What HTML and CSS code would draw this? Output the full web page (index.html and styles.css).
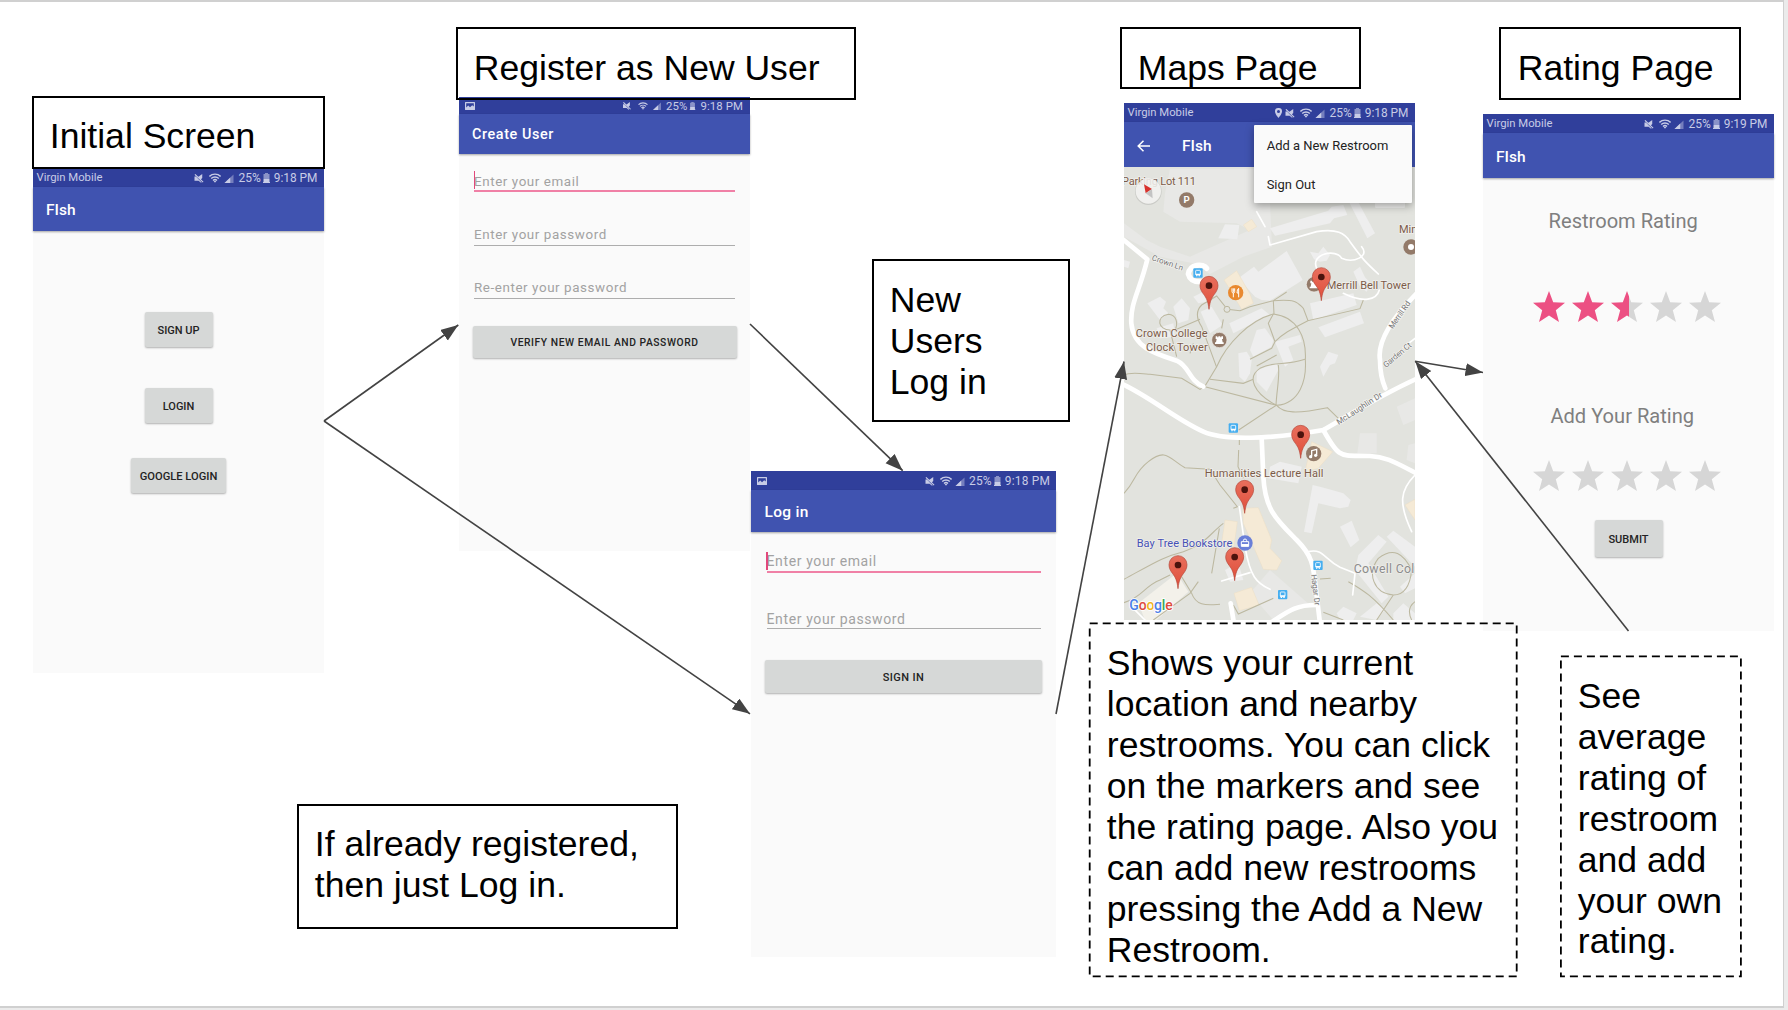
FILE: index.html
```html
<!DOCTYPE html>
<html lang="en">
<head>
<meta charset="utf-8">
<title>FIsh app flow</title>
<link rel="stylesheet" href="styles.css">
</head>
<body>
<svg class="defs" width="0" height="0" aria-hidden="true">
  <defs>
    <symbol id="i-mute" viewBox="0 0 10 10"><path d="M0 2.8H1.6L7.6 8.8V10L4.5 7.4H0ZM4 3.4 8.6 0V4.4L7 6ZM0 .9 1 0 10 8.6 9.2 9.4Z" fill="currentColor"/></symbol>
    <symbol id="i-wifi" viewBox="0 0 12 10"><path d="M.4 3.4C3.4.4 8.6.4 11.6 3.4M2.2 5.5C4.3 3.5 7.7 3.5 9.8 5.5M4 7.4C5.2 6.3 6.8 6.3 8 7.4" fill="none" stroke="currentColor" stroke-width="1.4"/><path d="M4.4 7.8 6 9.8 7.6 7.8Z" fill="currentColor"/></symbol>
    <symbol id="i-signal" viewBox="0 0 10 10"><path d="M0 10 10 .5V10Z" fill="currentColor" opacity=".45"/><path d="M0 10 6.4 4V10Z" fill="currentColor"/></symbol>
    <symbol id="i-battery" viewBox="0 0 7 10"><path d="M2 0H5V1H6.5V6H.5V1H2Z" fill="currentColor" opacity=".6"/><path d="M.5 6H6.5V9H7V10H0V9H.5Z" fill="currentColor"/></symbol>
    <symbol id="i-picture" viewBox="0 0 10 8"><path fill-rule="evenodd" d="M.6 0H9.4Q10 0 10 .6V7.4Q10 8 9.4 8H.6Q0 8 0 7.4V.6Q0 0 .6 0ZM1.2 1.2V5.4L3.2 3.6 5 5.2 7.2 3.2 8.8 4.6V1.2Z" fill="currentColor"/></symbol>
    <symbol id="i-place" viewBox="0 0 7 10"><path fill-rule="evenodd" d="M3.5 0A3.4 3.4 0 0 1 7 3.5C7 6 3.5 10 3.5 10S0 6 0 3.5A3.4 3.4 0 0 1 3.5 0ZM3.5 2A1.5 1.5 0 1 0 3.5 5 1.5 1.5 0 0 0 3.5 2Z" fill="currentColor"/></symbol>
    <symbol id="i-star" viewBox="0 0 32 31"><path d="M16 0 20.2 11.2 32 11.8 22.8 19.3 26 31 16 24.5 6 31 9.2 19.3 0 11.8 11.8 11.2Z" fill="currentColor"/></symbol>
    <linearGradient id="g-pin" x1="0" y1="0" x2="0" y2="1"><stop offset="0" stop-color="#e86f5d"/><stop offset="1" stop-color="#e04f3b"/></linearGradient>
    <linearGradient id="g-half"><stop offset=".55" stop-color="#ec5083"/><stop offset=".55" stop-color="#d6d6d6"/></linearGradient>
    <g id="pin"><path d="M0 0C-3-26-8-34-16-45-23-54-27-62-27-72A27 27 0 0 1 27-72C27-62 23-54 16-45 8-34 3-26 0 0Z" fill="url(#g-pin)" stroke="#b4473a" stroke-width="2"/><circle cy="-71" r="10" fill="#4b130d"/></g>
    <g id="bus"><rect x="-14" y="-14" width="28" height="28" rx="3" fill="#45aef0"/><rect x="-7" y="-8" width="14" height="14" rx="2" fill="none" stroke="#fff" stroke-width="2.5"/><path d="M-7 2H7V6H-7ZM-6 7h4v3h-4ZM2 7h4v3h-4Z" fill="#fff"/></g>
    <g id="rook"><circle r="23" fill="#937a69" stroke="#f2efea" stroke-width="2"/><path d="M-11-11h5v3h3v-3h6v3h3v-3h5v8h-3l2 10h3v5h-26v-5h3l2-10h-3Z" fill="#fff"/></g>
  </defs>
</svg>

<main class="slide">

  <section class="phone phone-initial">
    <div class="status"><span class="carrier">Virgin Mobile</span><svg class="mute"><use href="#i-mute"/></svg><svg class="wifi"><use href="#i-wifi"/></svg><svg class="signal"><use href="#i-signal"/></svg><span>25%</span><svg class="battery"><use href="#i-battery"/></svg><span class="time">9:18 PM</span></div>
    <header class="appbar">FIsh</header>
    <div class="stack">
      <button class="btn">SIGN UP</button>
      <button class="btn">LOGIN</button>
      <button class="btn btn-google">GOOGLE LOGIN</button>
    </div>
  </section>

  <section class="phone phone-create">
    <div class="status"><svg class="picture"><use href="#i-picture"/></svg><svg class="mute"><use href="#i-mute"/></svg><svg class="wifi"><use href="#i-wifi"/></svg><svg class="signal"><use href="#i-signal"/></svg><span>25%</span><svg class="battery"><use href="#i-battery"/></svg><span class="time">9:18 PM</span></div>
    <header class="appbar">Create User</header>
    <div class="form">
      <div class="field focused">Enter your email</div>
      <div class="field">Enter your password</div>
      <div class="field">Re-enter your password</div>
      <button class="btn">VERIFY NEW EMAIL AND PASSWORD</button>
    </div>
  </section>

  <section class="phone phone-login">
    <div class="status"><svg class="picture"><use href="#i-picture"/></svg><svg class="mute"><use href="#i-mute"/></svg><svg class="wifi"><use href="#i-wifi"/></svg><svg class="signal"><use href="#i-signal"/></svg><span>25%</span><svg class="battery"><use href="#i-battery"/></svg><span class="time">9:18 PM</span></div>
    <header class="appbar">Log in</header>
    <div class="form">
      <div class="field focused">Enter your email</div>
      <div class="field">Enter your password</div>
      <button class="btn">SIGN IN</button>
    </div>
  </section>

  <section class="phone phone-map">
    <div class="status"><span class="carrier">Virgin Mobile</span><svg class="place"><use href="#i-place"/></svg><svg class="mute"><use href="#i-mute"/></svg><svg class="wifi"><use href="#i-wifi"/></svg><svg class="signal"><use href="#i-signal"/></svg><span>25%</span><svg class="battery"><use href="#i-battery"/></svg><span class="time">9:18 PM</span></div>
    <header class="appbar"><svg class="back" viewBox="0 0 13 12"><path d="M13 6H1.5M6.5.8 1.2 6 6.5 11.2" fill="none" stroke="#fff" stroke-width="1.5"/></svg>FIsh</header>
    <svg class="map" viewBox="42 231 873 1359" preserveAspectRatio="none">
      <rect x="42" y="231" width="873" height="1359" fill="#e2e3de"/>
      <!-- lots and plazas -->
      <g fill="#e8e8e6">
        <path d="M180 236H440V330L480 340 486 470 400 500 300 552 250 520 150 500 42 440V400L110 450 150 470 240 500 420 420 380 400 210 395 160 365 165 310Z"/>
        <path d="M480 1440 600 1545 490 1590 420 1510Z"/><path d="M860 950 915 925V990L880 1005Z"/><path d="M750 1030H800V1090H742Z"/><path d="M895 1065 915 1060V1120L890 1110Z"/>
      </g>
      <!-- buildings -->
      <g fill="#eeeeee">
        <path d="M325 445 345 403 388 405 382 448Z"/><path d="M480 415 655 362 665 350 700 345 712 375 672 385 660 400 495 437Z"/><path d="M710 322 735 318 795 430 772 445Z"/>
        <path d="M600 485 625 490 640 470 660 495 650 512 630 515 612 508Z"/><path d="M385 565 432 530 445 545 530 483 578 570 480 632 455 630 435 620Z"/>
        <path d="M730 545 750 530 765 562 782 580 770 605 750 590Z"/><path d="M600 640 730 610 740 645 610 690Z"/><path d="M625 712 750 665 762 700 645 742Z"/>
        <path d="M112 640 150 620 168 635 160 655 175 670 150 690Z"/><path d="M190 650 215 625 240 655 235 690 205 700Z"/><path d="M272 665 305 650 338 705 300 730Z"/><path d="M358 700 455 655 480 675 370 730Z"/>
        <path d="M250 620 280 605 290 635 265 640Z"/><path d="M420 780 440 720 465 715 490 750 485 770 430 800Z"/><path d="M385 790 410 785 425 810 420 850 405 875 388 860Z"/><path d="M495 755 570 735 575 755 535 770 550 810 525 830Z"/><path d="M440 840 500 820 505 840 470 905 440 875Z"/>
        <path d="M630 830 655 785 685 795 675 820 660 825 640 860Z"/><path d="M140 715 190 700 195 740 150 745Z"/><path d="M42 510 60 515 55 535 42 530Z"/>
        <path d="M480 1130 510 1115 575 1130 565 1180 475 1165Z"/><path d="M608 1185 630 1190 700 1210 722 1230 715 1250 690 1255 625 1240 605 1330 582 1325Z"/><path d="M690 1310 725 1292 748 1350 722 1372Z"/>
        <path d="M745 1395 805 1335 830 1355 775 1420 835 1520 815 1540 735 1440Z"/><path d="M830 1340 850 1322 915 1370V1430Z"/><path d="M750 1580 800 1540 825 1560 800 1590ZM850 1570 880 1540 915 1570V1590H850ZM680 1570 700 1550 740 1570 730 1590H690Z"/><path d="M870 1490 915 1450V1495L885 1510Z"/><path d="M345 1440 385 1420 400 1470 360 1475Z"/>
      </g>
      <path fill="#f3f1ea" d="M85 1540 200 1450 235 1505 140 1590H105Z"/>
      <g fill="#f5ead6" stroke="#eddfc5" stroke-width="1.5">
        <path d="M400 405 425 388 440 410 415 425Z"/><path d="M342 570 380 542 420 612 430 640 395 658 372 620 355 590Z"/><path d="M605 1055 668 1085 625 1135 585 1145Z"/><path d="M398 1255 445 1253 485 1350 480 1375 515 1412 500 1440 460 1438 400 1300Z"/><path d="M345 1290 382 1295 372 1370 335 1360Z"/><path d="M372 1510 425 1492 447 1545 388 1562Z"/><path d="M885 1245 915 1228V1290Z"/>
      </g>
      <!-- footpaths -->
      <g fill="none" stroke="#bcb8a0" stroke-width="3.2">
        <path d="M42 855C60 845 90 850 120 853L215 865 270 898 285 888 320 830C350 760 420 690 490 672 560 680 590 740 586 810 590 870 570 940 500 946L285 890"/>
        <path d="M300 868 400 880 430 868M500 946C430 910 410 860 450 835 500 810 520 830 585 808M505 825C510 860 500 900 498 946L386 1020M500 946C520 970 560 972 652 953L685 985"/>
        <path d="M492 672 490 632 530 606M490 632 420 650 390 662 352 658 320 618 275 645C255 665 262 690 275 710L320 832M490 632C560 628 560 635 580 655L594 692 750 656 760 630M594 692C540 720 520 730 495 755L475 700 490 672M495 755 485 775 420 808M500 795 440 828"/>
        <path d="M200 800 180 720C145 720 135 680 175 673 200 675 205 700 195 720L270 688M340 688 335 715M250 760 240 790"/>
        <path d="M42 1210C80 1170 70 1150 115 1115 170 1070 180 1110 225 1133L300 1138 330 1185 382 1250 370 1255M386 1080 384 1130 400 1165M388 1050V1065"/>
        <path d="M42 1468C130 1420 160 1400 220 1385 290 1360 300 1330 340 1300M328 1315 305 1450M42 1538C100 1520 100 1490 150 1470L180 1455M215 1460 245 1510C260 1550 290 1545 330 1543M265 1475 240 1510 130 1590M370 1545 385 1572 490 1525"/>
        <path d="M630 1467 662 1465M715 1475C760 1500 790 1520 850 1590M850 1515 800 1590M850 1515C790 1510 770 1450 805 1405 850 1370 880 1390 905 1440 900 1490 880 1515 850 1515M640 1567 700 1590M915 1535C895 1550 895 1570 905 1590"/>
      </g>
      <circle cx="351" cy="658" r="9" fill="#e2e3de" stroke="#bcb8a0" stroke-width="3"/>
      <!-- streets -->
      <g fill="none" stroke="#fff" stroke-linecap="round" stroke-linejoin="round">
        <g stroke-width="14">
          <path d="M36 882C120 920 200 990 280 1025 340 1052 480 1048 640 1020 720 975 800 920 925 864"/>
          <path d="M36 446 112 508C90 600 60 640 64 700 70 770 130 790 200 812 240 830 235 870 280 890"/>
          <path d="M925 605C860 670 800 750 810 810 810 850 815 870 826 895"/>
          <path d="M455 1045 460 1160C465 1260 500 1290 560 1350 610 1400 610 1430 618 1500L630 1600"/>
          <path d="M640 1020C690 1110 690 1095 780 1098 830 1100 860 1120 925 1153"/>
          <path d="M485 1596C540 1560 560 1545 618 1545M362 1540 372 1600"/>
        </g>
        <path d="M235 552C240 520 280 520 290 535M235 552C240 575 260 578 285 575" stroke-width="16"/>
        <g stroke-width="5"><path d="M440 365 465 410M475 440 480 465 620 425C680 415 705 430 720 455 760 510 765 515 805 552M620 535C600 490 680 475 695 505 730 520 780 500 755 470M700 610C760 640 800 630 808 600M915 1155C870 1200 865 1240 905 1325M915 745 880 772"/>
        <path d="M595 1385C640 1375 640 1405 690 1432L735 1450 728 1515M388 1250 405 1370C420 1460 440 1480 480 1498M335 1473 420 1448M70 1555 105 1590"/></g>
      </g>
      <!-- places -->
      <g class="poi">
        <text x="36" y="286" textLength="222">Parking Lot 111</text>
        <text x="867" y="428">Min</text>
        <text x="650" y="596" textLength="252">Merrill Bell Tower</text>
        <text x="77" y="741" textLength="216">Crown College</text>
        <text x="108" y="782" textLength="185">Clock Tower</text>
        <text x="284" y="1161" textLength="356">Humanities Lecture Hall</text>
        <text class="shop" x="80" y="1372" textLength="287">Bay Tree Bookstore</text>
        <text class="area" x="731" y="1449" textLength="182">Cowell Col</text>
      </g>
      <g class="street">
        <text transform="translate(124 510) rotate(19)" textLength="98">Crown Ln</text>
        <text transform="translate(848 718) rotate(-55)" textLength="95">Merrill Rd</text>
        <text transform="translate(828 834) rotate(-40)" textLength="102">Garden Ct</text>
        <text transform="translate(686 1005) rotate(-33)" textLength="158">McLaughlin Dr</text>
        <text transform="translate(603 1454) rotate(83)" textLength="94">Hagar Dr</text>
      </g>
      <circle cx="230" cy="330" r="23" fill="#937a69"/><text class="parking" x="230" y="340">P</text>
      <circle cx="903" cy="471" r="23" fill="#937a69"/><circle cx="903" cy="471" r="9" fill="#fff"/>
      <circle cx="377" cy="608" r="23" fill="#e9892f"/><path d="M366 595v10q0 4 4 4v13M370 595v12M374 595v10q0 4-4 4M386 622V595q-5 3-5 14h5" fill="none" stroke="#fff" stroke-width="3"/>
      <use href="#rook" x="612" y="583"/><use href="#rook" x="328" y="750"/>
      <circle cx="611" cy="1091" r="23" fill="#937a69"/><path d="M605 1098V1082L620 1078V1094" fill="none" stroke="#fff" stroke-width="4"/><circle cx="602" cy="1100" r="5" fill="#fff"/><circle cx="617" cy="1096" r="5" fill="#fff"/>
      <circle cx="405" cy="1359" r="23" fill="#6a7fd8"/><path d="M394 1355h22v14h-22ZM400 1355v-3a5 5 0 0 1 10 0v3" fill="none" stroke="#fff" stroke-width="3"/><path d="M394 1362h22v7h-22Z" fill="#fff"/>
      <use href="#bus" x="264" y="549"/><use href="#bus" x="370" y="1014"/><use href="#bus" x="624" y="1426"/><use href="#bus" x="518" y="1514"/>
      <use href="#pin" x="297" y="658"/><use href="#pin" x="634" y="632"/><use href="#pin" x="572" y="1105"/><use href="#pin" x="404" y="1270"/><use href="#pin" x="374" y="1472"/><use href="#pin" x="204" y="1496"/>
      <!-- compass -->
      <circle cx="115" cy="305" r="40" fill="#000" opacity=".1"/><circle cx="115" cy="303" r="38" fill="#f7f7f5" opacity=".85"/>
      <path d="M102 283 126 297 107 310Z" fill="#d8322c"/><path d="M126 297 107 310 128 325Z" fill="#c3c3c3"/>
      <rect x="795" y="260" width="90" height="94" rx="4" fill="#f1f1ef"/>
      <text class="google" x="58" y="1560" textLength="130"><tspan fill="#4a80e8">G</tspan><tspan fill="#dd4b3e">o</tspan><tspan fill="#f0b41c">o</tspan><tspan fill="#4a80e8">g</tspan><tspan fill="#3aa757">l</tspan><tspan fill="#dd4b3e">e</tspan></text>
    </svg>
    <nav class="menu"><span>Add a New Restroom</span><span>Sign Out</span></nav>
  </section>

  <section class="phone phone-rating">
    <div class="status"><span class="carrier">Virgin Mobile</span><svg class="mute"><use href="#i-mute"/></svg><svg class="wifi"><use href="#i-wifi"/></svg><svg class="signal"><use href="#i-signal"/></svg><span>25%</span><svg class="battery"><use href="#i-battery"/></svg><span class="time">9:19 PM</span></div>
    <header class="appbar">FIsh</header>
    <div class="rating">
      <h2>Restroom Rating</h2>
      <div class="stars"><svg class="on"><use href="#i-star"/></svg><svg class="on"><use href="#i-star"/></svg><svg viewBox="0 0 32 31"><path d="M16 0 20.2 11.2 32 11.8 22.8 19.3 26 31 16 24.5 6 31 9.2 19.3 0 11.8 11.8 11.2Z" fill="url(#g-half)"/></svg><svg><use href="#i-star"/></svg><svg><use href="#i-star"/></svg></div>
      <h2 class="add">Add Your Rating</h2>
      <div class="stars"><svg><use href="#i-star"/></svg><svg><use href="#i-star"/></svg><svg><use href="#i-star"/></svg><svg><use href="#i-star"/></svg><svg><use href="#i-star"/></svg></div>
      <button class="btn">SUBMIT</button>
    </div>
  </section>

  <div class="note note-initial">Initial Screen</div>
  <div class="note note-register">Register as New User</div>
  <div class="note note-maps">Maps Page</div>
  <div class="note note-rating">Rating Page</div>
  <div class="note note-users">New<br>Users<br>Log in</div>
  <div class="note note-already">If already registered,<br>then just Log in.</div>
  <div class="note dashed note-shows">Shows your current<br>location and nearby<br>restrooms. You can click<br>on the markers and see<br>the rating page. Also you<br>can add new restrooms<br>pressing the Add a New<br>Restroom.</div>
  <div class="note dashed note-see">See<br>average<br>rating of<br>restroom<br>and add<br>your own<br>rating.</div>

  <svg class="connectors" viewBox="0 0 1788 1010">
    <defs><marker id="arrow" markerUnits="userSpaceOnUse" markerWidth="18" markerHeight="14" refX="17.5" refY="6.5" orient="auto"><path d="M0 0 17.5 6.5 0 13Z" fill="#434343"/></marker></defs>
    <g fill="none" stroke="#434343" stroke-width="1.6">
      <path d="M324 421 458.3 325" marker-end="url(#arrow)"/>
      <path d="M324 421 750 713.8" marker-end="url(#arrow)"/>
      <path d="M750 324 902.7 470.7" marker-end="url(#arrow)"/>
      <path d="M1056 714 1124 361.5" marker-end="url(#arrow)"/>
      <path d="M1415 361.3 1483 372.5" marker-end="url(#arrow)"/>
      <path d="M1628.5 631 1415.3 361.3" marker-end="url(#arrow)"/>
    </g>
    <g fill="none" stroke="#000" stroke-width="1.8" stroke-dasharray="8 5">
      <rect x="1089.7" y="623.4" width="427" height="353"/>
      <rect x="1560.9" y="656.4" width="180" height="320"/>
    </g>
  </svg>
</main>
</body>
</html>
```
FILE: styles.css
```css
* { box-sizing: border-box; }

body {
  margin: 0;
  width: 1788px;
  height: 1010px;
  overflow: hidden;
  background: #ebebeb;
  font-family: Roboto, "Liberation Sans", sans-serif;
}

.defs { position: absolute; }

.slide {
  position: relative;
  width: 1784px;
  height: 1008px;
  background: #fff;
  border-top: 2px solid #d0d0d0;
  border-bottom: 2px solid #d0d0d0;
  border-right: 1px solid #d0d0d0;
}

/* The canvas origin sits under the 2px top edge of the slide. */
.phone, .note { position: absolute; margin-top: -2px; }

.connectors {
  position: absolute;
  left: 0;
  top: -2px;
  width: 1788px;
  height: 1010px;
}

/* Phone screens */
.phone {
  display: flex;
  flex-direction: column;
  width: 291px;
  background: #fafafa;
}

.phone-initial { left: 33px; top: 168px; height: 505px; }
.phone-create { left: 459px; top: 97px; height: 454px; }
.phone-login { left: 751px; top: 471px; width: 305px; height: 486px; }
.phone-map { left: 1124px; top: 103px; height: 517px; overflow: hidden; }
.phone-rating { left: 1483px; top: 114px; height: 517px; }

.status {
  display: flex;
  flex: none;
  align-items: center;
  height: 19px;
  padding: 1px 6.5px 0 3.5px;
  background: #303f9b;
  color: #c8cce6;
  font-size: 12px;
  line-height: 18px;
  white-space: nowrap;
}

.carrier { font-size: 11.3px; }
.time { font-size: 11.9px; }
.status svg { flex: none; height: 10px; }
.status .mute { width: 10px; height: 9px; margin-left: auto; margin-right: 5px; }
.status .place { width: 7px; margin-left: auto; margin-right: 3px; }
.status .place + .mute { margin-left: 0; }
.status .wifi { width: 12px; margin-right: 3px; }
.status .signal { width: 10px; height: 9px; margin-right: 4px; }
.status .battery { width: 7px; margin: 0 4px 0 2px; }
.status .picture { width: 10px; height: 8px; margin-left: 2px; }

.appbar {
  display: flex;
  flex: none;
  align-items: center;
  height: 44px;
  padding-left: 13px;
  padding-top: 2px;
  background: #4053b0;
  box-shadow: 0 1px 2px rgba(0, 0, 0, .35);
  color: #fff;
  font-size: 15.5px;
  font-weight: 500;
}

.btn {
  display: block;
  width: 68px;
  height: 35px;
  padding: 1px 0 0;
  border: 0;
  border-radius: 2px;
  background: #d6d8d7;
  box-shadow: 0 1px 2px rgba(0, 0, 0, .3);
  color: #232323;
  font: 500 11px Roboto, sans-serif;
  white-space: nowrap;
}

.stack { display: flex; flex-direction: column; align-items: center; padding-top: 81px; }
.stack .btn + .btn { margin-top: 41px; }
.stack .btn + .btn-google { width: 95px; margin-top: 35px; font-size: 11.15px; }

/* Forms */
.form { display: flex; flex-direction: column; }

.field {
  position: relative;
  border-bottom: 1px solid #adadad;
  color: #a2a2a2;
  font-size: 13.4px;
  letter-spacing: .58px;
}

.field.focused { border-bottom: 2px solid #f080a6; }

.field.focused::before {
  content: "";
  position: absolute;
  left: -.5px;
  bottom: 1px;
  width: 1.5px;
  height: 18px;
  background: #e2487c;
}

.phone-create .status { height: 17px; padding-top: 1px; padding-right: 7px; font-size: 11.4px; line-height: 16px; letter-spacing: .1px; }
.phone-create .time { font-size: 11.4px; }
.phone-create .status svg { height: 8px; }
.phone-create .appbar { height: 40px; padding-top: 1px; font-size: 14.4px; letter-spacing: .58px; }
.phone-create .field { height: 53.5px; margin: 0 15px; padding-top: 34.5px; line-height: 15px; }
.phone-create .field.focused { height: 38px; padding-top: 19.5px; }
.phone-create .btn { width: 264px; height: 32px; margin: 27px 0 0 13.5px; font-size: 10.3px; letter-spacing: .56px; }

.phone-login .appbar { height: 42px; padding-left: 13.5px; padding-top: 1px; letter-spacing: .3px; }
.phone-login .status { padding-right: 6px; letter-spacing: .2px; }
.phone-login .field { height: 56px; margin: 0 15.5px; padding-top: 37.5px; line-height: 16px; font-size: 14px; letter-spacing: .62px; }
.phone-login .field.focused { height: 41px; padding-top: 21px; }
.phone-login .btn { width: 277px; height: 33px; margin: 31px 0 0 14px; letter-spacing: .38px; }

/* Map */
.phone-map .appbar { height: 45px; }
.phone-map .back { width: 13px; height: 12px; margin: 0 32.5px 0 -.5px; }
.map { display: block; width: 291px; height: 453px; font-family: Roboto, sans-serif; }

.poi text { fill: #7b5b49; font-size: 33px; stroke: #f1f0ec; stroke-width: 4px; paint-order: stroke; }
.poi .shop { fill: #4551b5; }
.poi .area { fill: #8c8c8c; font-size: 37px; }
.street text { fill: #777; font-size: 24px; stroke: #f4f4f2; stroke-width: 4px; paint-order: stroke; }
.parking { fill: #fff; font-size: 29px; font-weight: 700; text-anchor: middle; }
.google { font-size: 42px; font-weight: 500; stroke: #fff; stroke-width: 5px; paint-order: stroke; }

.menu {
  position: absolute;
  left: 129.5px;
  top: 22px;
  display: flex;
  flex-direction: column;
  width: 158.5px;
  height: 78px;
  padding: .5px 0 0 13.2px;
  border-radius: 1px;
  background: #fafafa;
  box-shadow: 0 3px 8px rgba(0, 0, 0, .35);
  color: #222;
  font-size: 12.95px;
  line-height: 39px;
  white-space: nowrap;
}

/* Rating */
.phone-rating .appbar { height: 45px; }
.rating { display: flex; flex-direction: column; align-items: center; }
.rating h2 { margin: 31px 10.5px 0 0; color: #7f7f7f; font-size: 20.1px; font-weight: 400; line-height: 24px; white-space: nowrap; }
.rating .add { margin-top: 82px; margin-right: 12.5px; }
.stars { display: flex; gap: 6.9px; margin: 58px 3px 0 0; color: #d6d6d6; }
.stars svg { width: 32px; height: 31px; }
.stars .on { color: #ec5083; }
.add + .stars { margin-top: 32px; }
.rating .btn { height: 37px; margin-top: 29px; }

/* Notes */
.note {
  padding: 18.3px 0 0 15.8px;
  border: 2px solid #000;
  color: #000;
  font: 35.55px/40.9px "Liberation Sans", Arial, sans-serif;
  white-space: nowrap;
}

.note.dashed { border-color: transparent; }

.note-initial { left: 32px; top: 96px; width: 293px; height: 73px; }
.note-register { left: 456px; top: 27px; width: 400px; height: 73px; padding-top: 19.3px; }
.note-maps { left: 1120px; top: 27px; width: 241px; height: 62px; padding-top: 19.3px; }
.note-rating { left: 1499px; top: 27px; width: 242px; height: 73px; padding: 19.3px 0 0 16.8px; }
.note-users { left: 872px; top: 259px; width: 198px; height: 163px; padding-top: 19.3px; }
.note-already { left: 297px; top: 804px; width: 381px; height: 125px; }
.note-shows { left: 1089px; top: 622px; width: 429px; height: 355px; padding-top: 19.3px; }
.note-see { left: 1560px; top: 655px; width: 182px; height: 322px; padding-top: 19px; }
```
